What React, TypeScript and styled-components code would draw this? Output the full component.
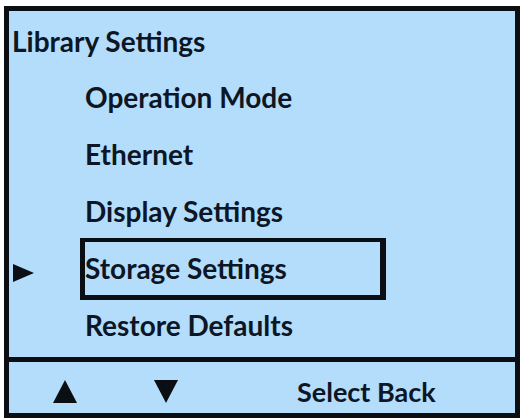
import React from "react";
import styled, { createGlobalStyle } from "styled-components";

const Global = createGlobalStyle`
  html, body { margin: 0; padding: 0; background: #ffffff; }
  body { font-family: Lato, "Open Sans", "Noto Sans", sans-serif; }
`;

const Page = styled.div`
  width: 520px;
  height: 418px;
  padding: 6px 0 0 4px;
  box-sizing: border-box;
`;

const Frame = styled.div`
  width: 516px;
  height: 412px;
  box-sizing: border-box;
  border: 5px solid #0b0f14;
  background: #b4dcfb;
  display: flex;
  flex-direction: column;
  color: #0c1624;
`;

const Menu = styled.div`
  flex: 1;
  min-height: 0;
  display: flex;
  flex-direction: column;
  padding: 14px 0 0 3px;
`;

const Title = styled.div`
  font-weight: 700;
  font-size: 28px;
  line-height: 32px;
  height: 44.5px;
`;

const List = styled.div`
  display: flex;
  flex-direction: column;
`;

const Row = styled.div`
  height: 57px;
  display: flex;
  align-items: center;
`;

const Pointer = styled.div<{ $on: boolean }>`
  width: 68px;
  display: flex;
  align-items: center;
  padding: 7px 0 0 1px;
  box-sizing: border-box;
  visibility: ${(p) => (p.$on ? "visible" : "hidden")};
`;

const Label = styled.div<{ $on: boolean }>`
  box-sizing: border-box;
  width: 306px;
  height: 62px;
  margin: -3px 0 -2px 0;
  padding-left: 0;
  display: flex;
  align-items: center;
  font-weight: 700;
  font-size: 28px;
  border: 4px solid ${(p) => (p.$on ? "#0b0f14" : "transparent")};
  border-left-width: 5px;
  border-right-width: 6px;
  border-bottom-width: 5px;
`;

const Footer = styled.div`
  height: 51px;
  flex-shrink: 0;
  border-top: 5px solid #0b0f14;
  display: flex;
  align-items: center;
  font-weight: 700;
  font-size: 27px;
`;

const Key = styled.div<{ $w: number }>`
  width: ${(p) => p.$w}px;
  display: flex;
  justify-content: center;
  align-items: center;
  padding-top: 8px;
`;

const Softkeys = styled.div`
  padding-left: 5px;
  padding-top: 8px;
`;

const Tri = ({ dir }: { dir: "up" | "down" | "right" }) => {
  if (dir === "right")
    return (
      <svg width="21" height="18" viewBox="0 0 21 18">
        <polygon points="0,0 21,9 0,18" fill="#0b0f14" />
      </svg>
    );
  return (
    <svg width="24" height="23" viewBox="0 0 24 23">
      {dir === "up" ? (
        <polygon points="12,0 24,23 0,23" fill="#0b0f14" />
      ) : (
        <polygon points="0,0 24,0 12,23" fill="#0b0f14" />
      )}
    </svg>
  );
};

const items = [
  "Operation Mode",
  "Ethernet",
  "Display Settings",
  "Storage Settings",
  "Restore Defaults",
];
const selected = 3;

export default function App() {
  return (
    <>
      <Global />
      <Page>
        <Frame>
          <Menu>
            <Title>Library Settings</Title>
            <List>
              {items.map((t, i) => (
                <Row key={t}>
                  <Pointer $on={i === selected}>
                    <Tri dir="right" />
                  </Pointer>
                  <Label $on={i === selected}>{t}</Label>
                </Row>
              ))}
            </List>
          </Menu>
          <Footer>
            <Key $w={111}>
              <Tri dir="up" />
            </Key>
            <Key $w={92}>
              <Tri dir="down" />
            </Key>
            <Key $w={80} />
            <Softkeys>Select Back</Softkeys>
          </Footer>
        </Frame>
      </Page>
    </>
  );
}
